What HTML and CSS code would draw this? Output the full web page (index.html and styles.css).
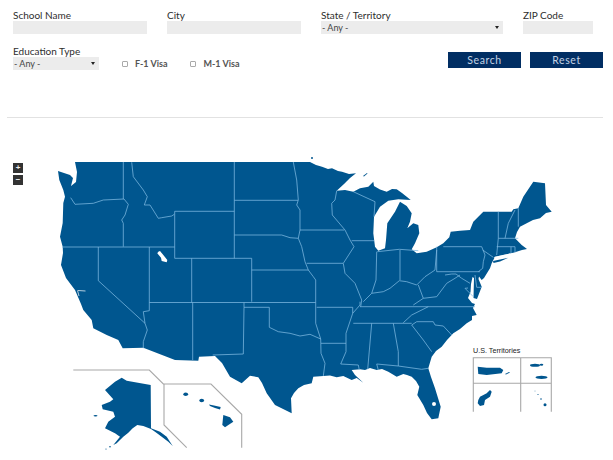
FILE: index.html
```html
<!DOCTYPE html>
<html lang="en">
<head>
<meta charset="utf-8">
<title>School Search</title>
<link rel="stylesheet" href="styles.css">
</head>
<body>
<form class="filters">
  <div class="row row-top">
    <div class="field w-name"><label class="lbl">School Name</label><input class="box" type="text"></div>
    <div class="field w-name"><label class="lbl">City</label><input class="box" type="text"></div>
    <div class="field w-state"><label class="lbl">State / Territory</label><div class="sel"><select class="box pick"><option>- Any -</option></select></div></div>
    <div class="field w-zip"><label class="lbl">ZIP Code</label><input class="box" type="text"></div>
  </div>
  <div class="row row-bottom">
    <div class="field w-edu"><label class="lbl">Education Type</label><div class="sel"><select class="box pick"><option>- Any -</option></select></div></div>
    <label class="check check-f"><input class="tick" type="checkbox"><span>F-1 Visa</span></label>
    <label class="check check-m"><input class="tick" type="checkbox"><span>M-1 Visa</span></label>
    <div class="actions"><button class="btn" type="button">Search</button><button class="btn" type="button">Reset</button></div>
  </div>
</form>
<hr class="rule">
<div class="map">
  <div class="zoom"><span class="zoom-btn">+</span><span class="zoom-btn">&#8722;</span></div>
  <svg class="map-svg" viewBox="0 118 613 342" width="613" height="342" aria-label="Map of the United States">
    <g class="land">
      <path fill-rule="evenodd" d="M75 162 L310 162 L316 165 L322 166.7 L328 169 L332 168.3 L338 171 L342 171.7 L349 174 L356 173.3 L350 178 L344 184 L336.7 190.7 L345 190 L353.3 191.7 L360 188.3 L368.3 186.7 L373.3 181.7 L374 186 L380 189.5 L386.7 191.7 L392 189 L396.7 189.3 L402 193 L406.7 196.7 L410.7 200 L398.3 199.3 L388.3 200.7 L380 206.7 L374 216.7 L373.3 233.3 L375 246.7 L378.3 250.7 L385 248.3 L386 240 L387.3 223.3 L395 211.7 L400 201.7 L406.7 206 L411.7 213.3 L410 221.7 L407.3 228.3 L413.3 223.3 L418.3 225 L419.3 233.3 L415 243.3 L411.7 249.3 L416.7 253.3 L426.7 251.7 L436.7 247.3 L443.3 243.3 L449.3 237.3 L450.7 231.7 L460 230.7 L470 230 L473.3 221.7 L483.3 211.7 L511.7 211.7 L513.3 209.3 L518.3 208.3 L523.3 196.7 L533.3 181.7 L545 183.3 L546 205 L551.7 211.7 L546 213 L540 218.3 L533 220 L526.7 223.3 L520 226.7 L517 232 L515 238.3 L521.7 245 L527 249 L522 250 L513.3 252.7 L495 256.7 L491.7 263.3 L490 268.3 L484 278 L481.7 280 L479 276.5 L478.5 279 L481.7 286.7 L477 299 L473.5 298 L474 278 L472.5 277 L471 284 L470.5 292 L468 298 L472 303 L475 304 L473 308 L476.7 315 L472 316 L472 320 L466.7 323.3 L460 329 L453.3 333.3 L447 340 L441.7 346.7 L436 351 L431.7 356.7 L428.3 368.3 L431 377 L435 388.3 L440.7 406.7 L438.3 418.3 L431.7 419.3 L427 413 L423.3 405 L417.3 395 L419.3 386.7 L416 381 L411.7 376.7 L407 375 L403.3 374 L396.7 376.7 L388.3 371.7 L382 369 L376.7 370 L370 368 L365 370 L360 369.3 L351.7 370 L355 375 L363.3 382.7 L356.7 378 L351.7 380 L343.3 376 L336.7 377.3 L330 375.5 L323.3 376 L313.3 376.7 L311.7 383.3 L304 385 L298.3 388.3 L294 393 L291 398.3 L291.7 413.3 L275 405 L266.7 393.3 L262 383 L258.3 377.3 L250 375.7 L241.7 383.3 L230 376.7 L222 363 L215 356 L199 356.7 L198.3 360.7 L175 360 L143.3 347.7 L122.7 348.3 L118.3 340 L106.7 335 L93.3 328.3 L91.7 320 L83.3 310 L81 304 L75 290 L66 278 L61 265 L63 253 L62.7 246.7 L60 236.7 L62.7 223 L63.3 203 L65 196.7 L63.3 190 L59.3 180 L58 171 L70 175 L73 178 L71 186 L76 182 L77 172 Z M158.3 251.7 L160 251 L163.3 255 L167.3 260 L166.7 262.3 L161.7 261 L161 257.7 L157.3 253.3 Z M434 402 A2 2 0 1 0 434 406 A2 2 0 1 0 434 402 Z"/>
      <path d="M493 261 L500 259.5 L508.3 257.7 L500 261.5 L493.5 263 Z"/>
      <path d="M363 176 L367 173 L367.5 173.5 L364 176.5 Z"/>
      <circle cx="312" cy="158" r="1"/>
      <path d="M105 390 L115 381.7 L121.7 377.7 L126.7 380.7 L150.7 385 L151 428.3 L160 431.7 L166.7 436.7 L172.7 446 L168.3 441.7 L161.7 436.7 L155 431.7 L151 429 L143.3 426 L137.3 425 L132.7 428.3 L128.3 432.7 L123.3 436.7 L116.7 443.3 L113.3 445 L120 436.7 L115 433.3 L105 428.3 L108.3 421.7 L115 416.7 L113.3 411.7 L102.7 409.3 L101.7 405 L110 401.7 L113.3 399.3 Z"/>
      <ellipse cx="95.5" cy="415.7" rx="2" ry=".8"/>
      <circle cx="110" cy="446.7" r=".8"/>
      <circle cx="106" cy="449" r=".6"/>
      <ellipse cx="185.7" cy="394.3" rx="2.4" ry="1.8"/>
      <ellipse cx="201.7" cy="400.5" rx="2.4" ry="1.8"/>
      <path d="M209 404.5 L214 405.5 L220.7 407 L220 409.5 L215 408 L210 406 Z"/>
      <path d="M223.3 415 L230 417.3 L233.3 421.7 L225 427.3 L222.3 425 Z"/>
      <path d="M477.7 366.7 L486.7 367.7 L500 367.7 L503.3 370 L501.7 373.3 L486.7 375 L478.3 374 Z"/>
      <path d="M505 374 L509 372 L510 372.5 L506 374.5 Z"/>
      <ellipse cx="535" cy="365.2" rx="5" ry="1.5"/>
      <ellipse cx="541.5" cy="364.8" rx="1.8" ry="1"/>
      <ellipse cx="541.5" cy="377.4" rx="6" ry="1.6"/>
      <path d="M478.3 400 L480 396.7 L486.7 393.3 L490 390 L491.7 391.7 L490 396.7 L485 400 L484 405 L480 406 L477.7 403.3 Z"/>
      <circle cx="535" cy="391" r=".4"/>
      <circle cx="538" cy="394.5" r=".6"/>
      <circle cx="541" cy="399" r=".8"/>
      <circle cx="545" cy="404.7" r="1.5"/>
    </g>
    <path class="borders" d="M123.3 162 V199 M70.7 197.7 L75 204.3 L93.3 203.3 L103.3 200 L124 199 L128.3 204.3 L125 215 L121.7 220 L123.3 223.3 V246.7 M62 247 H174.7 M131.7 162.3 L133.3 176.7 L143.3 190 L147.3 196.7 L144.3 205 L150 205 L158.3 218.3 L161.7 217.7 L171.7 216 L174.3 214.3 M174.7 211.3 H234.3 M174.7 211.3 V258.3 H251.7 V301.7 M234.3 162 V258.3 M234.3 200.3 H298 M293.3 162 L296.7 180 L298.3 200 L296.7 205 L300 210 V230 H344.3 M234.3 235 H281.7 L290 237.7 L298.3 238.3 L300 230 M298.3 238.3 L301.7 246.7 L305 261.7 L308.3 270 L313.3 276.7 L315.7 280 V323.3 L320.7 339 L321 353.3 L325 363.3 L323.3 376 M251.7 270 H308.3 M191.7 258.3 V302.5 M149.3 247 V310.7 L143.3 311.7 L145 323.3 L147.3 330 L143.3 341.7 V348.3 M149.3 302.5 H315.7 M192.7 302.5 V360 M98.3 247 V280.7 L145 323.3 M244 302.5 V307.3 L243.3 354 L212.7 355 M244 307.3 H269.3 V327.3 L278.3 331.7 L290 333.3 L300 336 L310 334.3 L320.7 339 M321 343.3 H346 M316.7 307.3 H352.7 V313.3 L360 305 V301.7 M352.7 313.3 L346 333.3 V351.7 L340.7 364 L358.3 365 L359.3 370 M371.7 323.3 L367.7 369.3 M353.3 323.3 H411.7 M393.3 323.3 L398.3 351.7 V366 M376.7 364 L398.3 366 L421.7 369.3 L428.3 368.3 M376.7 364 L378.3 370 M411.7 325 L423.3 340 L431.7 351.7 M411.7 325 L416.7 321.7 H433.3 L435 325 L443.3 326 L451.7 335 M403.3 322.7 L411.7 315 L428.3 306.7 M360 306.7 H475 M376.7 251.7 L376 280 L371.7 293.3 L363.3 301.7 M351.7 240.7 H374 M350 240 L354 246.7 L343.3 263.3 L345 273.3 L355 283.3 L361.7 300 L360.7 306.7 M306.7 263.3 H343 M336.7 190.7 L335 200 L331.7 203.3 L332.3 215 L345 230 L350 240 M353.3 191.7 L375 201.7 L374 216.7 M377.3 251.7 L399.3 249.3 L418.3 250.7 M400 250 V280 M371.7 293.3 L383.3 291.7 L390 288.3 L399.3 280.7 L406.7 281.7 L416.7 285 L425 276.7 L435 270 L436.7 250 M418.3 285 L423.3 298.3 L413.3 305 M423.3 298.3 L436.7 296.7 L446.7 283.3 L455 278.3 L460 275 M436.7 246.7 V271.7 H480 M443.3 246.7 H481.7 L485 255 L483.3 261.7 L482.7 268.3 L478.3 271.7 M482.7 250 L493.3 257.3 M445 275 L451.7 274 L456 274 L461.7 278.3 L470 283.3 M468 288 L465 288.3 L473.3 296.7 M475 275 L476.7 287.3 H481.7 M498.3 211.7 V238.3 L496.7 255 M498.3 238.3 H518.3 M496.7 246.7 H515 V252.7 M511 246.7 V253 M515 210 L508.3 223.3 L505 238.3 M518.3 208.3 V226.7"/>
    <path class="borders sound" d="M494 257.5 L510 254 M77.5 290.5 L79 296 M78 290.5 L85.5 291"/>
    <path class="frame" d="M73.3 370 H149.3 L163.3 384 H211 L241.7 414.3 V447.7 M164 384 V425 L186.7 447.7"/>
    <path class="frame" d="M473.3 411.7 V357.7 H551.3 V411.7 M520.7 357.7 V411.7 M473.3 383.3 H551.3"/>
    <text class="terr" x="473" y="353">U.S. Territories</text>
  </svg>
</div>
</body>
</html>
```

FILE: styles.css
```css
* { box-sizing: border-box; }
html, body { margin: 0; padding: 0; background: #fff; }
body { width: 613px; height: 460px; overflow: hidden; font-family: Lato, "Open Sans", sans-serif; color: #333; }

.filters { padding: 9px 10px 0 13px; height: 117px; }
.row { display: flex; gap: 20px; }
.row-bottom { margin-top: 11px; align-items: flex-start; gap: 0; }

.field { display: flex; flex-direction: column; }
.w-name { width: 134px; }
.w-state { width: 182px; }
.w-zip { width: 70px; }
.w-edu { width: 86px; }

.lbl { font-size: 10px; font-weight: 400; line-height: 12px; color: #2e2e2e; }
.box { display: block; width: 100%; height: 13px; border: 0; padding: 0 1px; margin: 0; background: #ececec; border-radius: 0; font-family: inherit; font-size: 9px; color: #444; }
.pick { appearance: none; -webkit-appearance: none; line-height: 13px; }
.sel { position: relative; }
.sel::after { content: ""; position: absolute; right: 4px; top: 5px; border: 2.5px solid transparent; border-top: 3px solid #222; border-bottom: 0; }

.check { display: flex; align-items: center; gap: 7px; margin-top: 13px; font-size: 9px; font-weight: 700; line-height: 12px; color: #555; }
.check-f { margin-left: 23px; }
.check-m { margin-left: 23px; }
.tick { appearance: none; -webkit-appearance: none; width: 6px; height: 6px; margin: 0; border: 1px solid #aaa; border-radius: 1px; background: #fff; }

.actions { display: flex; gap: 9px; margin-left: auto; margin-top: 7px; }
.btn { width: 73px; height: 16px; border: 0; padding: 0; background: #012e63; color: #c4d3e4; font-family: inherit; font-size: 10.5px; line-height: 16px; letter-spacing: .6px; }

.rule { display: block; width: 596px; height: 1px; margin: 0 0 0 7px; border: 0; background: #e2e2e2; }

.map { position: relative; height: 342px; }
.map-svg { display: block; }
.land { fill: #00568f; }
.borders { fill: none; stroke: #7fb9e2; stroke-width: .75; stroke-linejoin: round; }
.sound { stroke: #fff; stroke-width: .7; }
.frame { fill: none; stroke: #a8a8a8; stroke-width: 1.1; }
.terr { font-family: "Liberation Sans", sans-serif; font-size: 7.2px; fill: #222; }

.zoom { position: absolute; left: 13px; top: 45px; display: flex; flex-direction: column; gap: 2px; }
.zoom-btn { display: block; width: 10px; height: 10px; background: #333; color: #eee; font: 700 8px/10px "Liberation Sans", sans-serif; text-align: center; }
```
